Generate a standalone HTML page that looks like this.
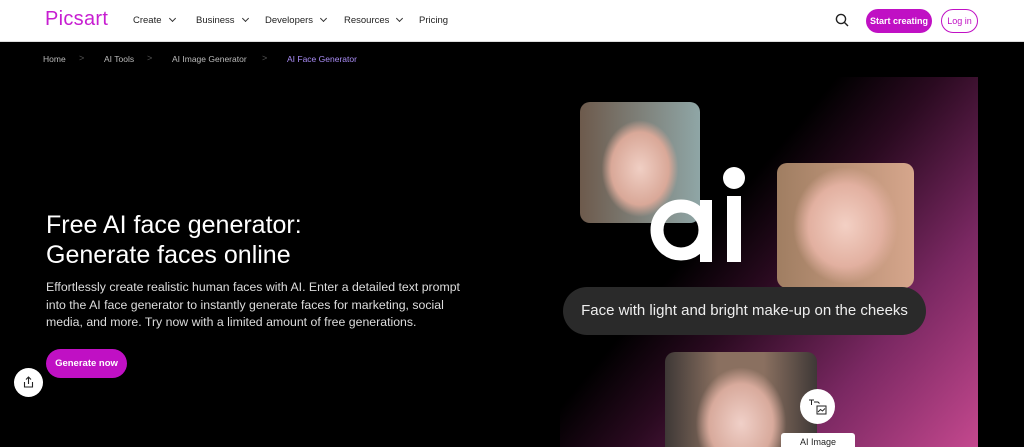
<!DOCTYPE html>
<html><head><style>
*{margin:0;padding:0;box-sizing:border-box}
html{overflow:hidden;height:447px}
body{width:1024px;height:447px;overflow:hidden;background:#000;font-family:"Liberation Sans",sans-serif;position:relative}
.hdr{position:absolute;left:0;top:0;width:1024px;height:42px;background:#fff;border-bottom:1px solid #ddd}
.a{position:absolute;white-space:nowrap}
.nav{font-size:9.5px;color:#222;top:15px}
.chev{display:inline-block;width:5px;height:5px;border-right:1.2px solid #333;border-bottom:1.2px solid #333;transform:rotate(45deg);margin-left:8px;position:relative;top:-2px}
.bc{font-size:8.5px;color:#bbb;top:54px}
.sep{font-size:9px;color:#555;top:53px}
.face{position:absolute;border-radius:10px;overflow:hidden}
</style></head><body>
<div class="hdr">
<div class="a" style="left:45px;top:8px;font-size:20px;color:#c71ed1;letter-spacing:.3px">Picsart</div>
<div class="a nav" style="left:133px">Create<span class="chev"></span></div>
<div class="a nav" style="left:196px">Business<span class="chev"></span></div>
<div class="a nav" style="left:265px">Developers<span class="chev"></span></div>
<div class="a nav" style="left:344px">Resources<span class="chev"></span></div>
<div class="a nav" style="left:419px">Pricing</div>
<svg class="a" style="left:835px;top:13px" width="14" height="14" viewBox="0 0 14 14"><circle cx="6" cy="6" r="4.6" fill="none" stroke="#222" stroke-width="1.4"/><path d="M9.5 9.5L13 13" stroke="#222" stroke-width="1.4"/></svg>
<div class="a" style="left:866px;top:9px;width:66px;height:24px;border-radius:12px;background:#c010c4;color:#fff;font-size:9px;font-weight:bold;text-align:center;line-height:24px">Start creating</div>
<div class="a" style="left:941px;top:9px;width:37px;height:24px;border-radius:12px;border:1px solid #c010c4;color:#c010c4;font-size:9px;text-align:center;line-height:22px">Log in</div>
</div>
<div class="a bc" style="left:43px">Home</div><div class="a sep" style="left:79px">&gt;</div>
<div class="a bc" style="left:104px">AI Tools</div><div class="a sep" style="left:147px">&gt;</div>
<div class="a bc" style="left:172px">AI Image Generator</div><div class="a sep" style="left:262px">&gt;</div>
<div class="a bc" style="left:287px;color:#a98cf5">AI Face Generator</div>

<div class="a" style="left:46px;top:210px;font-size:25px;line-height:30px;color:#fff">Free AI face generator:<br>Generate faces online</div>
<div class="a" style="left:46px;top:279px;font-size:12.3px;line-height:17.5px;color:#ddd">Effortlessly create realistic human faces with AI. Enter a detailed text prompt<br>into the AI face generator to instantly generate faces for marketing, social<br>media, and more. Try now with a limited amount of free generations.</div>
<div class="a" style="left:46px;top:349px;width:81px;height:29px;border-radius:15px;background:#c010c4;color:#fff;font-size:9.5px;font-weight:bold;text-align:center;line-height:29px">Generate now</div>
<div class="a" style="left:14px;top:368px;width:29px;height:29px;border-radius:50%;background:#fff"><svg width="29" height="29" viewBox="0 0 29 29"><path d="M10.5 14v5h8v-5M14.5 16V9M12 11.5l2.5-2.5 2.5 2.5" fill="none" stroke="#222" stroke-width="1.1"/></svg></div>

<div class="a" style="left:560px;top:77px;width:418px;height:370px;background:linear-gradient(130deg,#000 38%,#2a0a20 52%,#7a2862 75%,#c4488e 100%)"></div>
<div class="face" style="left:580px;top:102px;width:120px;height:121px;background:radial-gradient(ellipse 40% 50% at 50% 55%,#f0cfc4 0%,#d9a898 60%,transparent 80%),linear-gradient(90deg,#6d5a4c,#8fa6a6)"></div>
<div class="face" style="left:777px;top:163px;width:137px;height:125px;background:radial-gradient(ellipse 45% 55% at 50% 50%,#f3d0c4 0%,#e2b0a0 60%,transparent 85%),linear-gradient(90deg,#a07e62,#d6a68c)"></div>
<svg class="a" style="left:640px;top:160px" width="120" height="110" viewBox="0 0 120 110"><circle cx="41" cy="70" r="24" fill="none" stroke="#fff" stroke-width="13"/><rect x="60" y="40" width="12" height="62" fill="#fff"/><circle cx="94" cy="18" r="11" fill="#fff"/><rect x="87" y="36" width="14" height="66" fill="#fff"/></svg>
<div class="a" style="left:563px;top:287px;width:363px;height:48px;border-radius:24px;background:#2a2a2a;color:#eee;font-size:15px;text-align:center;line-height:48px">Face with light and bright make-up on the cheeks</div>
<div class="face" style="left:665px;top:352px;width:152px;height:110px;background:radial-gradient(ellipse 35% 60% at 50% 65%,#f0d0c8 0%,#d8aa9c 60%,transparent 85%),linear-gradient(90deg,#3e3836,#8a7060 35%,#8a7060 65%,#3e3836)"></div>
<div class="a" style="left:800px;top:389px;width:35px;height:35px;border-radius:50%;background:#fff"><svg width="35" height="35" viewBox="0 0 35 35"><path d="M9 11h5M11.5 11v5M14 13h4l1.5 1.5" fill="none" stroke="#222" stroke-width="1"/><rect x="17" y="17" width="9" height="8" fill="none" stroke="#222" stroke-width="1"/><path d="M18 23l2.5-2.5 2 1.5 2.5-2.5" fill="none" stroke="#222" stroke-width=".9"/></svg></div>
<div class="a" style="left:781px;top:433px;width:74px;height:20px;border-radius:3px;background:#fff;color:#222;font-size:9px;text-align:center;line-height:18px">AI Image</div>
</body></html>
